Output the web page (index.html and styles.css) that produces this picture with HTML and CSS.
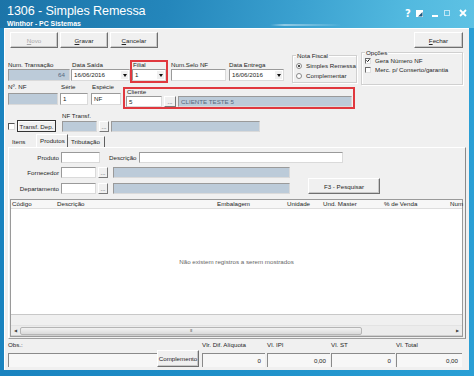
FILE: index.html
```html
<!DOCTYPE html>
<html lang="pt-BR">
<head>
  <meta charset="UTF-8">
  <title>1306 - Simples Remessa</title>
  <link rel="stylesheet" href="styles.css">
</head>
<body>
  <div class="window">
    <div class="titlebar">
      <div class="title">
        <h1>1306 - Simples Remessa</h1>
        <div class="subtitle">Winthor - PC Sistemas</div>
      </div>
      <div class="caption">
        <span class="help">?</span>
        <svg class="cap-icon" width="7" height="7" viewBox="0 0 7 7"><rect x="0.5" y="0.5" width="6" height="6" fill="#fff" stroke="#fff"/><path d="M2 6.5 L6.5 2 L6.5 6.5 Z" fill="#1f5a80"/></svg>
        <svg class="cap-min" width="6" height="7" viewBox="0 0 6 7"><rect x="0" y="5" width="6" height="2" fill="#fff"/></svg>
        <svg class="cap-max" width="6" height="6" viewBox="0 0 6 6"><rect x="0.5" y="0.5" width="5" height="5" fill="none" stroke="#bfe6f5" stroke-width="1"/></svg>
        <svg class="cap-close" width="8" height="8" viewBox="0 0 8 8"><path d="M1 1 L7 7 M7 1 L1 7" stroke="#fff" stroke-width="1.8"/></svg>
      </div>
    </div>

    <div class="client">
      <div class="toolbar">
        <button class="tbtn" disabled><u>N</u>ovo</button>
        <button class="tbtn"><u>G</u>ravar</button>
        <button class="tbtn"><u>C</u>ancelar</button>
        <button class="tbtn close"><u>F</u>echar</button>
      </div>

      <!-- cabeçalho -->
      <div class="head">
        <div class="field w-trans">
          <span class="lbl">Num. Transação</span>
          <div class="edit ro num">64</div>
        </div>
        <div class="field w-saida">
          <span class="lbl">Data Saída</span>
          <div class="edit combo"><span class="val">16/06/2016</span><span class="arrow"></span></div>
        </div>
        <div class="field mark filial">
          <span class="lbl">Filial</span>
          <div class="edit combo"><span class="val">1</span><span class="arrow"></span></div>
        </div>
        <div class="field w-selo">
          <span class="lbl">Num.Selo NF</span>
          <div class="edit"></div>
        </div>
        <div class="field w-entrega">
          <span class="lbl">Data Entrega</span>
          <div class="edit combo"><span class="val">16/06/2016</span><span class="arrow"></span></div>
        </div>
        <div class="group nota">
          <span class="legend">Nota Fiscal</span>
          <div class="opt"><span class="radio on"></span>Simples Remessa</div>
          <div class="opt"><span class="radio"></span>Complementar</div>
        </div>
        <div class="group opcoes">
          <span class="legend">Opções</span>
          <div class="opt"><span class="check on"><svg width="5" height="5" viewBox="0 0 5 5"><path d="M0.6 2.4 L2 3.8 L4.4 1" fill="none" stroke="#000" stroke-width="1.2"/></svg></span>Gera Número NF</div>
          <div class="opt"><span class="check"></span>Merc. p/ Conserto/garantia</div>
        </div>
      </div>

      <div class="row2">
        <div class="field w-nf">
          <span class="lbl">Nº. NF</span>
          <div class="edit ro"></div>
        </div>
        <div class="field w-serie">
          <span class="lbl">Série</span>
          <div class="edit">1</div>
        </div>
        <div class="field w-especie">
          <span class="lbl">Espécie</span>
          <div class="edit">NF</div>
        </div>
        <div class="field mark cliente">
          <span class="lbl">Cliente</span>
          <div class="line">
            <div class="edit cod">5</div>
            <button class="dots">...</button>
            <div class="edit ro nome">CLIENTE TESTE 5</div>
          </div>
        </div>
      </div>

      <div class="row3">
        <span class="check"></span>
        <button class="sbtn transf">Transf. Dep.</button>
        <div class="field w-nftransf">
          <span class="lbl">NF Transf.</span>
          <div class="edit ro"></div>
        </div>
        <button class="dots off">...</button>
        <div class="edit ro long"></div>
      </div>

      <!-- abas -->
      <div class="tabs">
        <span class="tab">Itens</span>
        <span class="tab active">Produtos</span>
        <span class="tab side">Tributação</span>
      </div>
      <div class="sheet">
        <div class="frow">
          <span class="rl">Produto</span>
          <div class="edit prod"></div>
          <span class="rl desc-l">Descrição</span>
          <div class="edit desc"></div>
        </div>
        <div class="fbox">
          <div class="fcol">
            <div class="frow">
              <span class="rl">Fornecedor</span>
              <div class="edit small"></div>
              <button class="dots">...</button>
              <div class="edit ro look"></div>
            </div>
            <div class="frow">
              <span class="rl">Departamento</span>
              <div class="edit small"></div>
              <button class="dots">...</button>
              <div class="edit ro look"></div>
            </div>
          </div>
          <button class="sbtn f3">F3 - Pesquisar</button>
        </div>

        <div class="grid">
          <div class="ghead">
            <span>Código</span>
            <span>Descrição</span>
            <span>Embalagem</span>
            <span>Unidade</span>
            <span>Und. Master</span>
            <span>% de Venda</span>
            <span>Num</span>
          </div>
          <div class="gbody">Não existem registros a serem mostrados</div>
          <div class="gfoot"></div>
          <div class="hscroll">
            <span class="sarrow">&#9664;</span>
            <span class="thumb"><span class="grip">III</span></span>
            <span class="sarrow right">&#9654;</span>
          </div>
        </div>
      </div>

      <!-- rodapé -->
      <div class="bottom">
        <div class="bfield obs">
          <span class="lbl">Obs.:</span>
          <div class="sunk"></div>
        </div>
        <button class="sbtn compl">Complemento</button>
        <div class="bfield b1">
          <span class="lbl">Vlr. Dif. Alíquota</span>
          <div class="sunk">0</div>
        </div>
        <div class="bfield b2">
          <span class="lbl">Vl. IPI</span>
          <div class="sunk">0,00</div>
        </div>
        <div class="bfield b3">
          <span class="lbl">Vl. ST</span>
          <div class="sunk">0</div>
        </div>
        <div class="bfield b4">
          <span class="lbl">Vl. Total</span>
          <div class="sunk">0,00</div>
        </div>
      </div>
    </div>
  </div>
</body>
</html>
```

FILE: styles.css
```css
*, *::before, *::after { box-sizing: border-box; }
body {
  margin: 0;
  width: 474px; height: 376px;
  overflow: hidden;
  font-family: "Liberation Sans", Arial, sans-serif;
  font-size: 6.2px;
  color: #252525;
}
button { font: inherit; color: inherit; margin: 0; padding: 0; }

/* janela */
.window {
  height: 376px;
  display: flex; flex-direction: column;
  background: linear-gradient(90deg, #1a83bf, #1f90c9 50%, #2a9fd5);
  padding: 0 5px 6px 4px;
}
.titlebar {
  height: 28px;
  margin: 0 -5px 0 -4px;
  padding: 3px 7px 0 7px;
  display: flex; justify-content: space-between;
  color: #fff;
  background:
    linear-gradient(90deg, transparent 57%, rgba(255,255,255,.45) 60%, rgba(255,255,255,.1) 70%, transparent 72%) 0 24px / 100% 2px no-repeat,
    linear-gradient(100deg, #1c74a8 0%, #2486bb 35%, #3aa0cf 62%, #52b9df 85%, #5ec2e4 100%);
}
.title h1 {
  margin: 0;
  font-size: 12.6px; font-weight: 400;
  line-height: 17px;
  letter-spacing: -.1px;
}
.subtitle { font-size: 6.9px; font-weight: 700; line-height: 7px; margin-top: 0; }
.caption {
  display: flex; align-items: center;
  height: 14px; margin-top: 3px;
}
.help { font-size: 10px; font-weight: 700; width: 6px; font-family: "DejaVu Sans", sans-serif; }
.cap-icon { margin-left: 5px; }
.cap-min { margin-left: 9px; }
.cap-max { margin-left: 6px; }
.cap-close { margin-left: 9px; }

.client {
  flex: 1;
  background: #f0f0f0;
  border-top: 1px solid #fff;
  border-left: 1px solid #fff;
  padding: 0 5px 0 3px;
  display: flex; flex-direction: column;
}

/* barra de botões */
.toolbar { display: flex; gap: 2px; margin-top: 3px; height: 16px; padding-left: 2px; }
.tbtn {
  width: 48px; height: 16px;
  background: #f0f0f0;
  border: 1px solid; border-color: #fff #6f6f6f #6f6f6f #fff;
  box-shadow: inset -1px -1px 0 #c8c8c8;
}
.tbtn:disabled { color: #a8a8a8; }
.tbtn.close { margin-left: auto; width: 49px; margin-right: 1px; }

/* campos */
.field { display: flex; flex-direction: column; }
.lbl { line-height: 7px; height: 7px; white-space: nowrap; }
.edit {
  height: 12px;
  background: #fff;
  border: 1px solid; border-color: #9a9a9a #dadada #dadada #9a9a9a;
  padding: 0 2px;
  line-height: 10px;
  white-space: nowrap; overflow: hidden;
}
.edit.ro { background: #bccbd9; color: #56697e; }
.edit.num { text-align: right; padding-right: 4px; }
.combo { display: flex; padding-right: 1px; }
.combo .val { flex: 1; }
.arrow {
  width: 7px; height: 8px; margin-top: 1px;
  background: #f0f0f0;
  display: flex; align-items: center; justify-content: center;
}
.arrow::after {
  content: "";
  border-left: 2.5px solid transparent;
  border-right: 2.5px solid transparent;
  border-top: 3px solid #111;
}
.mark { border: 2px solid #e0383e; }

.head { display: flex; align-items: flex-start; height: 31px; margin-top: 4px; }
.head .field { margin-top: 9px; gap: 1px; }
.w-trans { width: 62px; }
.w-saida { width: 59px; margin-left: 1px; }
.w-saida .lbl { padding-left: 1px; }
.head .filial { width: 38px; margin-top: 8px; gap: 1px; }
.filial .lbl { line-height: 6px; height: 6px; padding-left: 1px; }
.w-selo { width: 55px; margin-left: 3px; }
.w-entrega { width: 55px; margin-left: 3px; }

.group {
  border: 1px solid #d0d0d0;
  box-shadow: inset 1px 1px 0 #fff, 1px 1px 0 #fff;
  position: relative;
  padding: 4px 0 0 3px;
}
.legend {
  position: absolute; top: -4px; left: 3px;
  background: #f0f0f0; padding: 0 1px;
  line-height: 7px;
}
.opt { display: flex; align-items: center; gap: 3px; height: 9px; white-space: nowrap; }
.nota { width: 65px; height: 28px; margin: 3px 0 0 8px; }
.opcoes { width: 102px; height: 33px; margin: 0 0 0 4px; padding-top: 3px; }
.radio {
  width: 6px; height: 6px; border-radius: 50%;
  border: 1px solid #8a8a8a; background: #fff;
  display: flex; align-items: center; justify-content: center;
}
.radio.on::after { content: ""; width: 2px; height: 2px; border-radius: 50%; background: #111; }
.check {
  width: 6px; height: 6px; flex: none;
  border: 1px solid; border-color: #6a6a6a #e0e0e0 #e0e0e0 #6a6a6a;
  background: #fff;
  display: flex; align-items: center; justify-content: center;
}
.opcoes .opt { gap: 4px; }
.nota .opt { margin-top: 1px; gap: 4px; }

.row2 { display: flex; align-items: flex-start; height: 26px; }
.row2 .lbl { height: 10px; }
.w-nf { width: 50px; }
.w-serie { width: 28px; margin-left: 2px; }
.w-serie .lbl { padding-left: 1px; }
.w-especie { width: 30px; margin-left: 3px; }
.w-especie .lbl { padding-left: 1px; }
.row2 .cliente { width: 232px; margin: 4px 0 0 2px; height: 22px; }
.cliente .lbl { height: 7px; line-height: 6px; padding-left: 2px; }
.line { display: flex; align-items: center; padding-left: 1px; }
.cliente .edit { height: 11px; }
.edit.cod { width: 36px; }
.dots {
  width: 12px; height: 11px;
  background: #f0f0f0;
  border: 1px solid; border-color: #fff #7a7a7a #7a7a7a #fff;
  line-height: 6px; font-size: 6px; color: #333;
}
.line .dots { margin-left: 2px; }
.edit.nome { width: 174px; margin-left: 2px; }

.row3 { display: flex; align-items: flex-end; height: 20px; margin-top: 3px; }
.row3 .check { margin-bottom: 2px; width: 7px; height: 7px; border-color: #555 #ddd #ddd #555; }
.sbtn {
  background: #f0f0f0;
  border: 1px solid; border-color: #fff #6f6f6f #6f6f6f #fff;
  box-shadow: inset -1px -1px 0 #c8c8c8;
}
.transf { width: 39px; height: 12px; margin-left: 2px; border-color: #333; box-shadow: inset 1px 1px 0 #fff; }
.w-nftransf { width: 35px; margin-left: 6px; gap: 2px; }
.row3 .edit { height: 11px; }
.dots.off { margin-left: 2px; width: 10px; }
.edit.long { width: 149px; margin-left: 2px; }

/* abas */
.tabs { display: flex; align-items: flex-end; height: 13px; margin-top: 2px; }
.tab { height: 11px; line-height: 10px; padding: 0 4px; border-top: 1px solid transparent; }
.tab:first-child { padding-left: 4px; width: 28px; }
.tab.active {
  height: 13px; line-height: 11px;
  background: #f0f0f0;
  border-top: 1px solid #fff; border-left: 1px solid #fff; border-right: 1px solid #5f5f5f;
  padding: 0 3px;
  width: 32px;
}
.tab.side { border-right: 1px solid #5f5f5f; border-top-color: #fff; padding: 0 3px; width: 37px; }

.sheet {
  height: 192px;
  margin-right: -2px;
  border: 1px solid; border-color: #fff #8a8a8a #a0a0a0 #fff;
  padding: 4px 2px 0 1px;
}
.frow { display: flex; align-items: center; height: 11px; }
.rl { width: 49px; text-align: right; white-space: nowrap; }
.frow .edit { height: 11px; }
.edit.prod { width: 39px; margin-left: 2px; }
.rl.desc-l { width: 28px; margin-left: 9px; text-align: left; }
.edit.desc { width: 204px; margin-left: 2px; }
.fbox { display: flex; align-items: flex-end; margin-top: 4px; }
.fcol { display: flex; flex-direction: column; gap: 5px; }
.edit.small { width: 35px; margin-left: 2px; }
.frow .dots { width: 10px; margin-left: 2px; }
.edit.look { width: 177px; margin-left: 5px; }
.f3 { width: 72px; height: 16px; margin-left: 18px; }

/* grade */
.grid {
  height: 138px; margin-top: 5px;
  border: 1px solid #9a9a9a;
  background: #fff;
  display: flex; flex-direction: column;
}
.ghead {
  display: grid;
  grid-template-columns: 45px 160px 70px 36px 61px 66px 1fr;
  height: 9px; line-height: 8px;
  background: #f7f7f7;
  border-bottom: 1px solid #dedede;
  white-space: nowrap;
}
.ghead span { padding-left: 1px; }
.gbody {
  flex: 1;
  display: flex; align-items: center; justify-content: center;
  color: #666;
  padding-bottom: 1px;
}
.gfoot { height: 11px; background: #f0f0f0; border-top: 1px solid #c8c8c8; }
.hscroll {
  height: 11px;
  display: flex; align-items: center;
  background: #ececec;
  border-top: 1px solid #e3e3e3;
  border-bottom: 1px solid #d0d0d0;
  padding: 0 3px;
}
.sarrow { font-size: 4px; color: #444; width: 6px; }
.sarrow.right { margin-left: auto; text-align: right; }
.thumb {
  width: 342px; height: 8px;
  background: linear-gradient(#f2f2f2, #dadada);
  border: 1px solid #b5b5b5; border-radius: 2px;
  display: flex; align-items: center; justify-content: center;
}
.grip { font-size: 4px; color: #666; letter-spacing: -.5px; }

/* rodapé */
.bottom { display: flex; align-items: flex-end; height: 26px; margin-top: 2px; }
.bfield { display: flex; flex-direction: column; justify-content: space-between; height: 26px; }
.sunk {
  height: 14px;
  border-top: 1px solid #8a8a8a; border-left: 1px solid #8a8a8a;
  background: #f7f7f7;
  text-align: right; line-height: 13px; padding-right: 4px;
}
.obs { width: 149px; }
.compl { width: 42px; height: 17px; }
.b1 { width: 63px; margin-left: 3px; }
.b2 { width: 63px; margin-left: 2px; }
.b3 { width: 64px; margin-left: 1px; }
.b4 { width: 66px; margin-left: 1px; }
```
